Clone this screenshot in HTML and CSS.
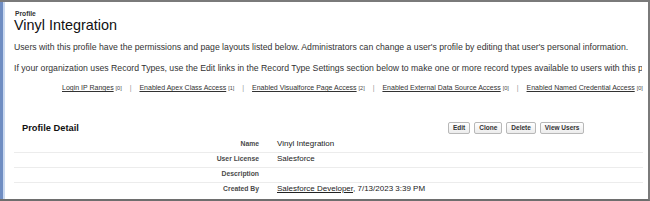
FILE: index.html
```html
<!DOCTYPE html>
<html lang="en">
<head>
    <meta charset="UTF-8">
    <title>Profile: Vinyl Integration</title>
    <link rel="stylesheet" href="styles.css">
</head>
<body>
    <div class="frame">
        <div class="side-strip"></div>
        <div class="content">
            <div class="page-header">
                <div class="page-type">Profile</div>
                <h1 class="page-title">Vinyl Integration</h1>
            </div>

            <p class="intro">Users with this profile have the permissions and page layouts listed below. Administrators can change a user's profile by editing that user's personal information.</p>
            <p class="intro">If your organization uses Record Types, use the Edit links in the Record Type Settings section below to make one or more record types available to users with this profile.</p>

            <div class="related-links">
                <a href="#">Login IP Ranges</a> <span class="count">[0]</span>
                <span class="sep">|</span>
                <a href="#">Enabled Apex Class Access</a> <span class="count">[1]</span>
                <span class="sep">|</span>
                <a href="#">Enabled Visualforce Page Access</a> <span class="count">[2]</span>
                <span class="sep">|</span>
                <a href="#">Enabled External Data Source Access</a> <span class="count">[0]</span>
                <span class="sep">|</span>
                <a href="#">Enabled Named Credential Access</a> <span class="count">[0]</span>
            </div>

            <div class="detail-block">
                <div class="detail-header">
                    <h2 class="detail-title">Profile Detail</h2>
                    <div class="buttons">
                        <button class="btn">Edit</button>
                        <button class="btn">Clone</button>
                        <button class="btn">Delete</button>
                        <button class="btn">View Users</button>
                    </div>
                </div>
                <div class="detail-row">
                    <div class="label">Name</div>
                    <div class="value">Vinyl Integration</div>
                </div>
                <div class="detail-row">
                    <div class="label">User License</div>
                    <div class="value">Salesforce</div>
                </div>
                <div class="detail-row">
                    <div class="label">Description</div>
                    <div class="value"></div>
                </div>
                <div class="detail-row">
                    <div class="label">Created By</div>
                    <div class="value"><a href="#">Salesforce Developer</a>, 7/13/2023 3:39 PM</div>
                </div>
            </div>
        </div>
    </div>
</body>
</html>
```

FILE: styles.css
```css
body {
    margin: 0;
    font-family: 'Liberation Sans', Arial, sans-serif;
    color: #222;
    background: #fff;
}
.frame {
    width: 650px;
    height: 201px;
    box-sizing: border-box;
    display: flex;
    border-top: 2px solid #7a7a7a;
    border-right: 2px solid #7a7a7a;
    border-bottom: 2px solid #6e6e6e;
    overflow: hidden;
}
.side-strip {
    width: 3px;
    flex-shrink: 0;
    background: #6f8dc2;
    border-right: 2px solid #c9d8ef;
}
.content {
    flex-grow: 1;
    min-width: 0;
    padding-left: 9px;
    overflow: hidden;
}
.page-header {
    padding-top: 8px;
}
.page-type {
    font-size: 6.7px;
    font-weight: bold;
    color: #333;
    line-height: 7px;
    padding-left: 1px;
}
.page-title {
    margin: 0;
    font-size: 14.4px;
    font-weight: normal;
    line-height: 16px;
    color: #111;
}
.intro {
    margin: 9px 6px 0 0;
    font-size: 8.7px;
    line-height: 10px;
    color: #333;
    white-space: nowrap;
    overflow: hidden;
}
.intro + .intro {
    margin-top: 11px;
}
.related-links {
    margin-top: 10px;
    padding-left: 48px;
    font-size: 7px;
    line-height: 10px;
    white-space: nowrap;
    color: #444;
}
.related-links a {
    color: #333;
}
.related-links .count {
    font-size: 5.5px;
}
.related-links .sep {
    color: #999;
    margin: 0 6px;
}
.detail-block {
    margin-top: 26px;
    margin-right: 5px;
}
.detail-header {
    display: flex;
    align-items: center;
    height: 18px;
    margin-bottom: 1px;
}
.detail-title {
    margin: 0 0 0 8px;
    font-size: 9.3px;
    font-weight: bold;
    color: #111;
    width: 426px;
    flex-shrink: 0;
}
.buttons {
    display: flex;
    gap: 4px;
}
.btn {
    font-family: inherit;
    font-size: 6.5px;
    font-weight: bold;
    color: #333;
    height: 12px;
    padding: 0 4px;
    line-height: 10px;
    border: 1px solid #b8b8b8;
    border-radius: 2px;
    background: linear-gradient(#fff, #ececec);
}
.detail-row {
    display: grid;
    grid-template-columns: 245px 1fr;
    height: 15px;
    line-height: 12px;
    border-bottom: 1px solid #ececec;
    box-sizing: border-box;
}
.detail-row:last-child {
    border-bottom: none;
}
.label {
    text-align: right;
    font-weight: bold;
    font-size: 6.8px;
    color: #4a4a4a;
}
.value {
    padding-left: 18px;
    font-size: 8px;
    color: #222;
}
.value a {
    color: #222;
}
```
